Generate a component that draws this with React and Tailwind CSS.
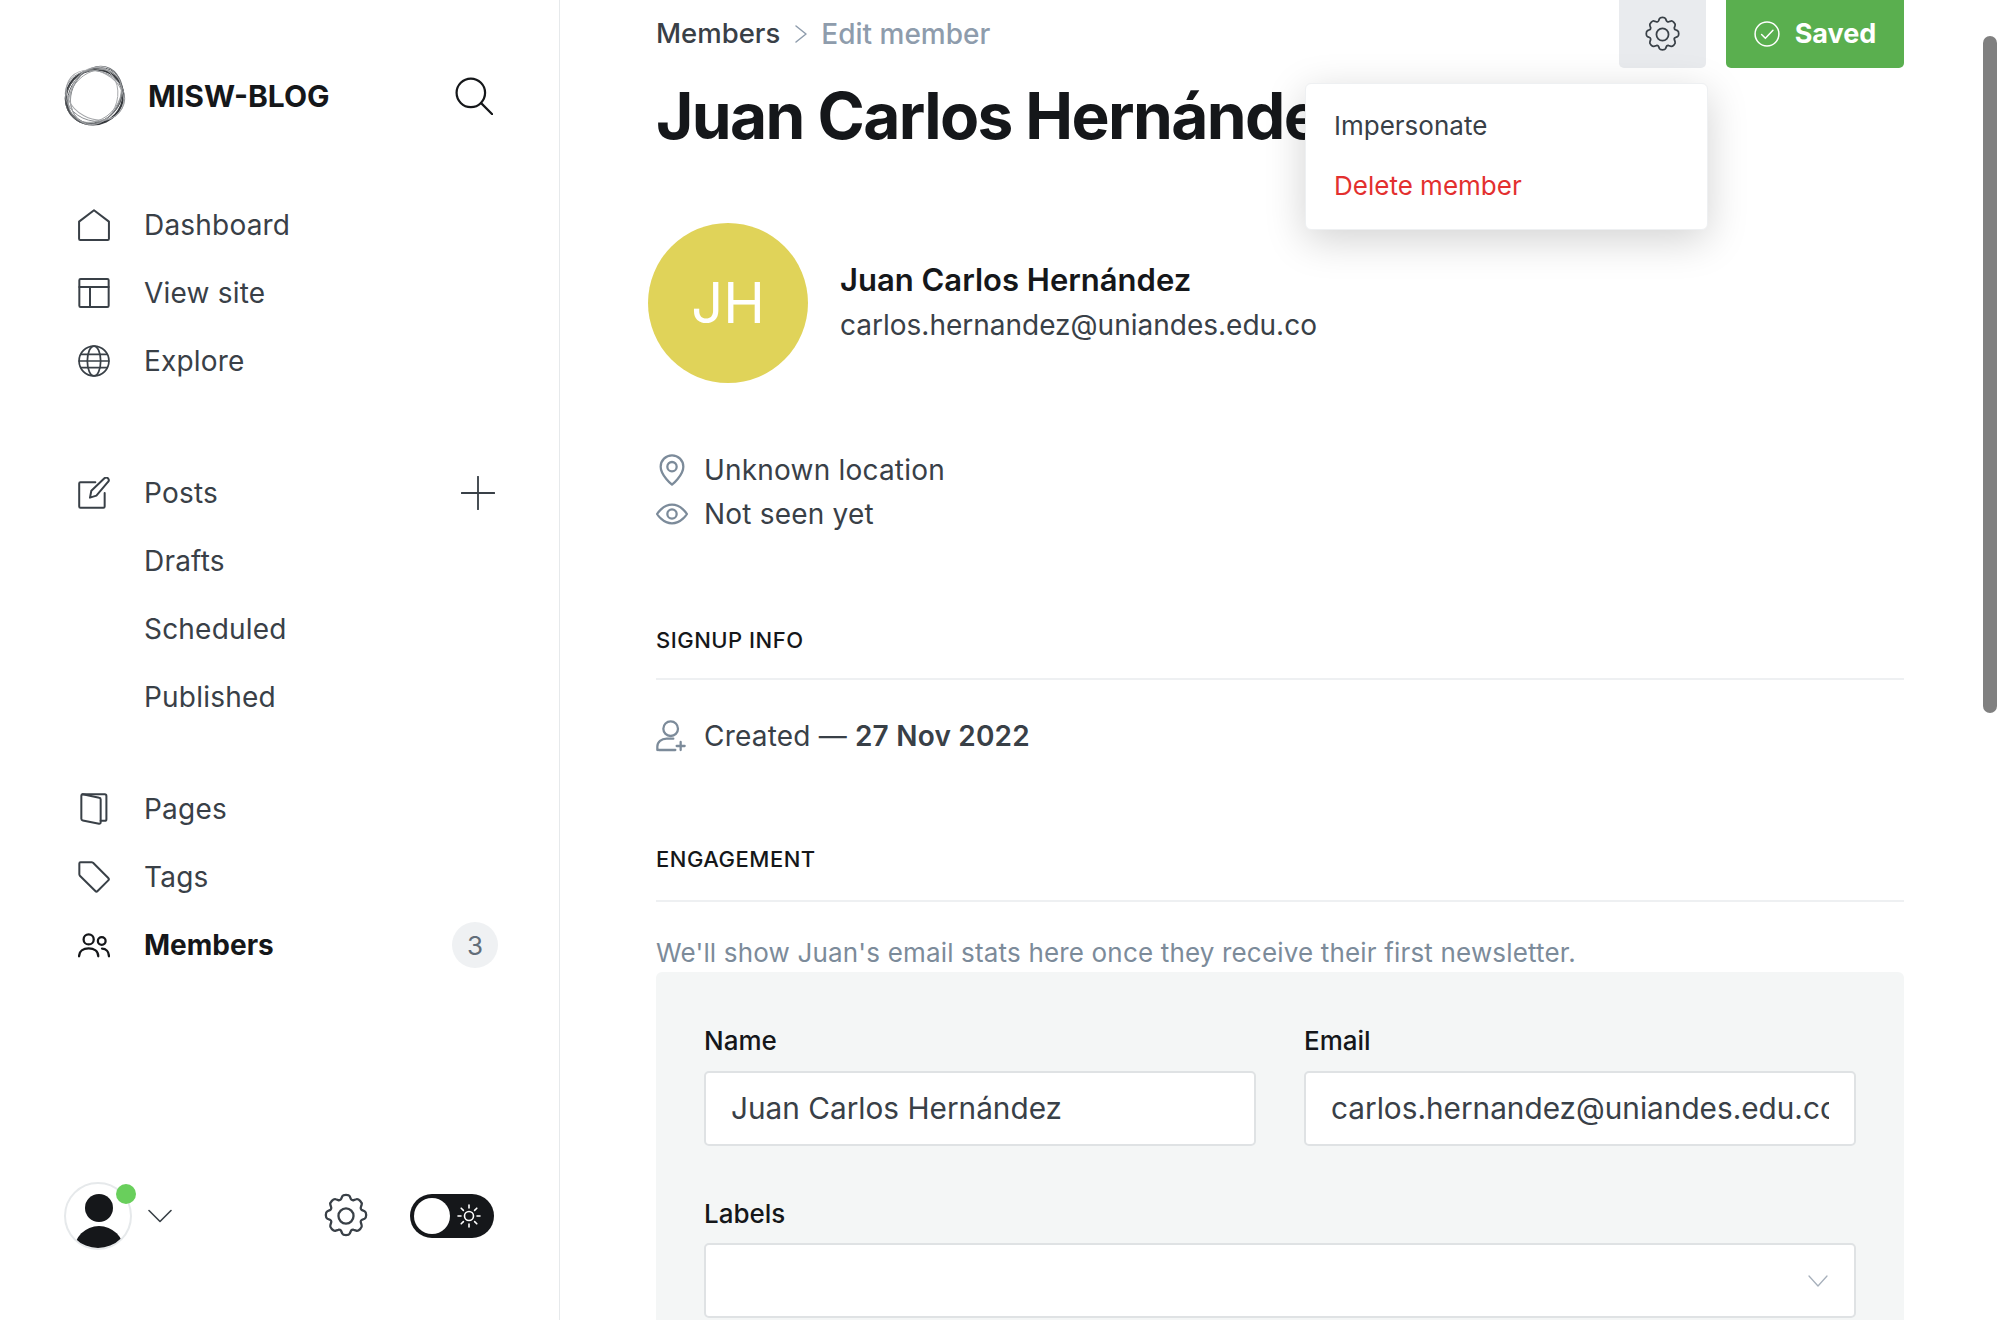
import React from "react";

const S = ({ children, className = "", vb = "0 0 24 24", sw = 1.5 }) => (
  <svg viewBox={vb} fill="none" stroke="currentColor" strokeWidth={sw} strokeLinecap="round" strokeLinejoin="round" className={className}>
    {children}
  </svg>
);

const Gear = ({ className, sw = 1.5 }) => (
  <S className={className} sw={sw} vb="1 1 22 22">
    <circle cx="12" cy="12" r="3.6" />
    <path d="M10.2 2.6c.5-1 3.1-1 3.6 0l.5 1.2c.2.5.9.8 1.4.6l1.2-.4c1.1-.4 3 1.5 2.6 2.6l-.4 1.2c-.2.5.1 1.2.6 1.4l1.2.5c1 .5 1 3.1 0 3.6l-1.2.5c-.5.2-.8.9-.6 1.4l.4 1.2c.4 1.1-1.5 3-2.6 2.6l-1.2-.4c-.5-.2-1.2.1-1.4.6l-.5 1.2c-.5 1-3.1 1-3.6 0l-.5-1.2c-.2-.5-.9-.8-1.4-.6l-1.2.4c-1.1.4-3-1.5-2.6-2.6l.4-1.2c.2-.5-.1-1.2-.6-1.4l-1.2-.5c-1-.5-1-3.1 0-3.6l1.2-.5c.5-.2.8-.9.6-1.4l-.4-1.2c-.4-1.1 1.500-3 2.600-2.600l1.200.4c.5.2 1.200-.1 1.400-.6z" />
  </S>
);

const ic = "w-[32px] h-[32px] shrink-0";
const icons = {
  home: <S className={ic}><path d="M.8 9.500 12 .9l11.200 8.600v12.800c0 .5-.4.9-.9.9H1.700c-.5 0-.9-.4-.9-.9z" /></S>,
  site: <S className={ic}><rect x="1" y="1.500" width="22" height="21" rx="1" /><path d="M1 7.500h22M9 7.500v15" /></S>,
  globe: <S className={ic} sw={1.3}><circle cx="12" cy="12" r="11.200" /><ellipse cx="12" cy="12" rx="5" ry="11.200" /><path d="M2.200 7h19.600M.9 12h22.200M2.200 17h19.600" /></S>,
  edit: <S className={ic}><path d="M13 4H1.800c-.5 0-.9.4-.9.9v17.300c0 .5.4.9.9.9h17.300c.5 0 .9-.4.9-.9V12" /><path d="M9 15.500l1-5.200L19.800 1c.8-.7 2-.7 2.700 0 .7.8.7 2 0 2.700L13.800 14z" /></S>,
  pages: <S className={ic}><path d="M3.500 1h16.600c.7 0 1.200.5 1.200 1.200v17.400c0 .7-.5 1.200-1.200 1.200H17" /><path d="M3.500 1l12.400 2.500c.6.1 1.100.7 1.100 1.300v17.400c0 .6-.6 1-1.200.9L3.600 20.600c-.6-.1-1.100-.7-1.100-1.300V2c0-.6.5-1 1-1z" /></S>,
  tag: <S className={ic}><path d="M1 1.800c0-.5.4-.9.9-.9h8.400c.4 0 .7.2 1 .4l11.400 11.500c.5.5.5 1.200 0 1.700l-8 8c-.5.5-1.200.5-1.700 0L1.400 11c-.3-.3-.4-.6-.4-1z" /></S>,
  users: <S className={ic} sw={1.7}><circle cx="8" cy="7.800" r="3.800" /><path d="M.8 20.500c0-3.900 3.200-6 7.200-6s7.200 2.100 7.200 6" /><circle cx="17.800" cy="9" r="2.900" /><path d="M18 14.700c3 0 5.200 2.200 5.200 5.800" /></S>,
};

const Row = ({ icon, label, bold, right }) => (
  <div className="flex items-center h-[68px]">
    <span className={bold ? "w-[66px] flex justify-start text-[#15171a]" : "w-[66px] flex justify-start text-[#394047]"}>{icon}</span>
    <span className={bold ? "text-[28px] font-bold text-[#15171a]" : "text-[28px] tracking-[0.2px] text-[#394047]"}>{label}</span>
    {right && <span className="ml-auto">{right}</span>}
  </div>
);

const Logo = () => (
  <svg viewBox="0 0 62 62" className="w-[62px] h-[62px]" fill="none" stroke="#5c5f63" strokeWidth="0.9">
    <ellipse cx="30.500" cy="32" rx="29" ry="27" transform="rotate(-25 30.500 32)" strokeWidth="2.200" stroke="#35383c" />
    <ellipse cx="31" cy="31" rx="30.500" ry="25" transform="rotate(-50 31 31)" />
    <ellipse cx="30" cy="31" rx="30" ry="25.500" transform="rotate(-38 30 31)" />
    <ellipse cx="32" cy="30" rx="30" ry="24" transform="rotate(-62 32 30)" stroke="#73767a" />
    <ellipse cx="31" cy="31" rx="30" ry="25" transform="rotate(15 31 31)" stroke="#8b8e92" />
    <ellipse cx="31" cy="30" rx="30" ry="23.500" transform="rotate(28 31 30)" stroke="#a5a7aa" />
    <ellipse cx="31" cy="31" rx="29.500" ry="23" transform="rotate(-45 31 31)" stroke="#9a9da0" />
    <ellipse cx="30" cy="31" rx="29" ry="23.500" transform="rotate(-75 30 31)" stroke="#a5a7aa" />
  </svg>
);

const Sidebar = () => (
  <aside className="w-[560px] shrink-0 border-r border-[#e6e9eb] h-full flex flex-col pl-[64px] pr-[61px]">
    <div className="flex items-center h-[62px] mt-[65px]">
      <Logo />
      <span className="ml-[22px] text-[30px] font-bold text-[#15171a]">MISW-BLOG</span>
      <S className="w-[38px] h-[38px] ml-auto mr-[5px] text-[#15171a]" sw={1.4}>
        <circle cx="10" cy="10" r="9" />
        <path d="M16.500 16.500 23.500 23.500" />
      </S>
    </div>
    <nav className="mt-[64px] pl-[14px]">
      <Row icon={icons.home} label="Dashboard" />
      <Row icon={icons.site} label="View site" />
      <Row icon={icons.globe} label="Explore" />
      <div className="h-[64px]" />
      <Row
        icon={icons.edit}
        label="Posts"
        right={
          <S className="w-[34px] h-[34px] mr-[3px] text-[#394047]" sw={1.3}>
            <path d="M12 .5v23M.5 12h23" />
          </S>
        }
      />
      <Row icon={<span />} label="Drafts" />
      <Row icon={<span />} label="Scheduled" />
      <Row icon={<span />} label="Published" />
      <div className="h-[44px]" />
      <Row icon={icons.pages} label="Pages" />
      <Row icon={icons.tag} label="Tags" />
      <Row
        icon={icons.users}
        label="Members"
        bold
        right={
          <span className="flex items-center justify-center w-[46px] h-[46px] rounded-full bg-[#eff1f3] text-[26px] text-[#626d79]">3</span>
        }
      />
    </nav>
    <div className="mt-[203px] flex items-center h-[68px]">
      <div className="relative w-[68px] h-[68px] rounded-full border-2 border-[#e6e9eb] overflow-visible">
        <div className="absolute inset-0 rounded-full overflow-hidden">
          <div className="absolute left-[19px] top-[10px] w-[28px] h-[28px] rounded-full bg-[#15171a]" />
          <div className="absolute left-[8px] top-[42px] w-[50px] h-[50px] rounded-full bg-[#15171a]" />
        </div>
        <div className="absolute right-[-6px] top-0 w-[20px] h-[20px] rounded-full bg-[#69cf5c]" />
      </div>
      <S className="w-[24px] h-[14px] ml-[16px] text-[#394047]" vb="0 0 24 14" sw={1.6}>
        <path d="M1 1.500 12 12.500 23 1.500" />
      </S>
      <Gear className="w-[46px] h-[46px] ml-[151px] text-[#394047]" sw={1.100} />
      <div className="ml-[41px] w-[84px] h-[44px] rounded-full bg-[#15171a] flex items-center pl-[4px]">
        <div className="w-[36px] h-[36px] rounded-full bg-white" />
        <S className="w-[24px] h-[24px] ml-[7px] text-white" sw={1.6}>
          <circle cx="12" cy="12" r="4.500" />
          <path d="M12 1v3M12 20v3M1 12h3M20 12h3M4.200 4.200l2.200 2.200M17.600 17.600l2.200 2.200M4.200 19.800l2.200-2.200M17.600 6.400l2.200-2.200" />
        </S>
      </div>
    </div>
  </aside>
);

const Section = ({ children, extra }) => (
  <div className={"h-[40px] flex items-center border-b-2 border-[#eef0f2] box-content text-[22px] font-medium tracking-[0.5px] text-[#15171a] " + extra}>
    {children}
  </div>
);

const Field = ({ label, value }) => (
  <div className="flex-1 min-w-0">
    <div className="text-[26px] font-medium text-[#15171a] leading-[32px] h-[46px]">{label}</div>
    <div className="h-[75px] bg-white border-2 border-[#dfe2e4] rounded-[5px] px-[25px] flex items-center text-[29.750px] text-[#394047]">
      <div className="w-full overflow-hidden whitespace-nowrap">{value}</div>
    </div>
  </div>
);

const Main = () => (
  <main className="flex-1 min-w-0 relative h-full pl-[96px] pr-[96px]">
    <div className="flex items-center h-[68px]">
      <span className="text-[27.500px] font-medium text-[#394047]">Members</span>
      <S className="w-[14px] h-[20px] ml-[14px] text-[#8e9cac]" vb="0 0 14 20" sw={1.5}>
        <path d="M2 2l10 8-10 8" />
      </S>
      <span className="ml-[13px] text-[28px] font-medium text-[#8e9cac]">Edit member</span>
      <div className="ml-auto w-[87px] h-[68px] bg-[#e9ebee] rounded-b-[5px] flex items-center justify-center">
        <Gear className="w-[37px] h-[37px] text-[#394047]" sw={1.050} />
      </div>
      <div className="ml-[20px] w-[178px] h-[68px] bg-[#5aaf4f] rounded-b-[5px] flex items-center justify-center text-white text-[27px] font-bold">
        <S className="w-[26px] h-[26px] mr-[15px]" sw={1.4}>
          <circle cx="12" cy="12" r="11" />
          <path d="M7 12.500l3.500 3.500L17.500 8.500" />
        </S>
        Saved
      </div>
    </div>
    <h1 className="mt-[12px] h-[72px] leading-[72px] text-[64px] font-bold tracking-[-1.600px] text-[#15171a] whitespace-nowrap">
      Juan Carlos Hernández
    </h1>

    <div className="absolute left-[745px] top-[83px] w-[403px] h-[147px] bg-white rounded-[6px] border border-[#eef0f2] shadow-[0_10px_40px_rgba(0,0,0,0.18)] pt-[11px] px-[28px] text-[26px]">
      <div className="h-[60px] flex items-center text-[#394047]">Impersonate</div>
      <div className="h-[60px] flex items-center text-[#e3302f]">Delete member</div>
    </div>

    <div className="mt-[71px] flex items-center -ml-[8px]">
      <div className="w-[160px] h-[160px] rounded-full bg-[#e0d359] flex items-center justify-center text-white text-[56px]">JH</div>
      <div className="ml-[32px] -mt-[1px]">
        <div className="text-[31px] font-semibold text-[#15171a] leading-[40px]">Juan Carlos Hernández</div>
        <div className="text-[28px] text-[#394047] leading-[40px] mt-[5px]">carlos.hernandez@uniandes.edu.co</div>
      </div>
    </div>

    <div className="mt-[65px] text-[28px] tracking-[0.2px] text-[#394047] leading-[44px]">
      <div className="flex items-center">
        <span className="w-[48px] flex">
          <S className="w-[32px] h-[32px] text-[#7c8b9a]" sw={1.7}>
            <path d="M12 23s8.500-7 8.500-13.500A8.500 8.500 0 1 0 3.500 9.500C3.500 16 12 23 12 23z" />
            <circle cx="12" cy="9.500" r="3.500" />
          </S>
        </span>
        Unknown location
      </div>
      <div className="flex items-center">
        <span className="w-[48px] flex">
          <S className="w-[32px] h-[32px] text-[#7c8b9a]" sw={1.7}>
            <path d="M.8 12S5 5 12 5s11.200 7 11.200 7-4.200 7-11.200 7S.8 12 .8 12z" />
            <circle cx="12" cy="12" r="3.500" />
          </S>
        </span>
        Not seen yet
      </div>
    </div>

    <div className="mt-[84px]"><Section extra="pb-[18px]">SIGNUP INFO</Section></div>
    <div className="mt-[34px] flex items-center text-[28px] tracking-[0.2px] text-[#394047] leading-[44px]">
      <span className="w-[48px] flex">
        <S className="w-[32px] h-[32px] text-[#7c8b9a]" sw={1.7}>
          <circle cx="11" cy="6.500" r="5.500" />
          <path d="M1 22.500V20c0-3.500 3-6 7-6h5M14.500 22.500H2M18.500 16.500v6M15.500 19.500h6" />
        </S>
      </span>
      Created —&nbsp;<span className="font-semibold">27 Nov 2022</span>
    </div>

    <div className="mt-[81px]"><Section extra="pb-[21px]">ENGAGEMENT</Section></div>
    <div className="mt-[32px] h-[38px] leading-[38px] text-[26px] tracking-[0.170px] text-[#7c8b9a] whitespace-nowrap">
      We'll show Juan's email stats here once they receive their first newsletter.
    </div>

    <div className="bg-[#f4f6f6] rounded-t-[6px] px-[48px] pt-[53px] pb-[40px]">
      <div className="flex gap-[48px]">
        <Field label="Name" value="Juan Carlos Hernández" />
        <Field label="Email" value="carlos.hernandez@uniandes.edu.co" />
      </div>
      <div className="mt-[52px] text-[26px] font-medium text-[#15171a] leading-[32px] h-[45px]">Labels</div>
      <div className="h-[75px] bg-white border-2 border-[#dfe2e4] rounded-[5px] flex items-center justify-end pr-[26px]">
        <S className="w-[20px] h-[12px] text-[#a7b0bb]" vb="0 0 20 12" sw={1.3}>
          <path d="M1 1l9 10 9-10" />
        </S>
      </div>
    </div>
  </main>
);

export default function App() {
  return (
    <div className="relative flex h-[1320px] w-[2000px] overflow-hidden bg-white font-['Inter',sans-serif]">
      <Sidebar />
      <Main />
      <div className="absolute right-[3px] top-[36px] w-[14px] h-[677px] rounded-full bg-[#808080]" />
    </div>
  );
}
